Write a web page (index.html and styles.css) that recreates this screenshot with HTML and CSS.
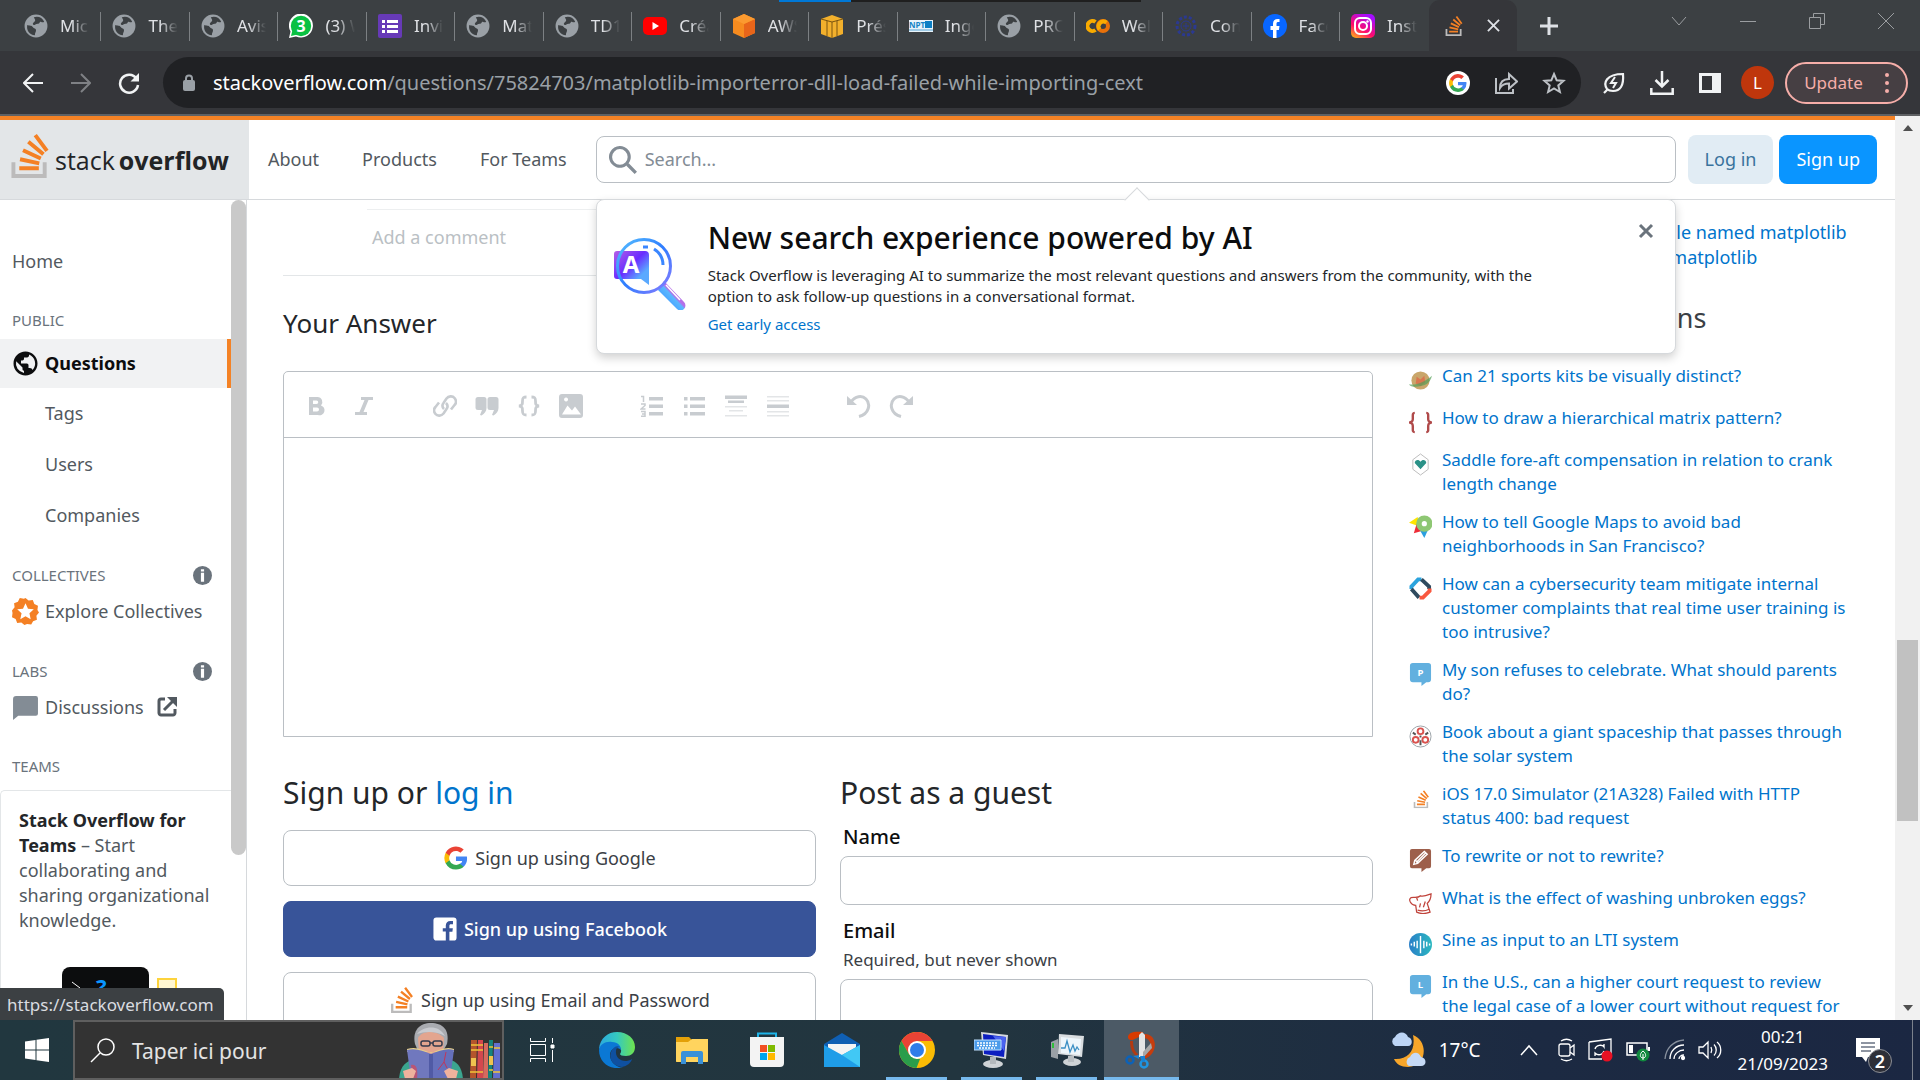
FILE: index.html
```html
<!DOCTYPE html>
<html lang="en">
<head>
<meta charset="utf-8">
<title>python - Matplotlib ImportError: DLL load failed while importing _cext - Stack Overflow</title>
<link rel="stylesheet" href="styles.css">
</head>
<body>
<svg class="sprite" aria-hidden="true">
  <symbol id="globe" viewBox="0 0 18 18"><path d="M9 1C4.64 1 1 4.64 1 9c0 4.36 3.64 8 8 8 4.36 0 8-3.64 8-8 0-4.36-3.64-8-8-8ZM8 15.32a6.46 6.46 0 0 1-4.3-2.74 6.46 6.46 0 0 1-.93-5.01L7 11.68v.8c0 .88.12 1.32 1 1.32v1.52Zm5.72-2c-.2-.66-1-1.32-1.72-1.32h-1v-2c0-.44-.56-1-1-1H6V7h1c.44 0 1-.56 1-1V5h2c.88 0 1.4-.72 1.4-1.6v-.33a6.45 6.45 0 0 1 3.83 4.51 6.45 6.45 0 0 1-1.51 5.74Z" fill="currentColor"/></symbol>
  <symbol id="webglobe" viewBox="0 0 22 22"><circle cx="11" cy="11" r="10.500" fill="#9aa0a6"/><path d="M3 10c2 1 4 0 5 2 1 1.500 3 1 3 3s-1 2-1 4.500C5 19 2 15 3 10ZM9 3c4-1.500 8 .5 9.500 4-1 1-2 .5-3 0-1.500 0-1 2-3 2s-2 1.500-3.500 1S8 8 9.500 7 10 5 9 3Z" fill="#3c4043"/></symbol>
  <symbol id="so" viewBox="0 0 24 24"><path d="M15.725 0l-1.720 1.277 6.390 8.588 1.716-1.277ZM11.785 3.418l-1.369 1.644 8.225 6.850 1.369-1.644ZM8.635 7.883l-.905 1.940 9.702 4.517.904-1.940ZM6.785 12.743l-.44 2.093 10.473 2.201.44-2.092ZM6.155 17.603v2.130h10.660v-2.130Z" fill="#f48024"/><path d="M1.890 15.470V24h19.190v-8.530h-2.133v6.397H4.021V15.470Z" fill="#bcbbbb"/></symbol>
  <symbol id="google" viewBox="0 0 18 18"><path d="M16.510 8H8.980v3h4.300c-.18 1-.74 1.480-1.600 2.040v2.010h2.600a7.800 7.800 0 0 0 2.380-5.880c0-.57-.05-.66-.15-1.180Z" fill="#4285F4"/><path d="M8.980 17c2.160 0 3.970-.72 5.300-1.940l-2.600-2a4.800 4.800 0 0 1-7.180-2.540H1.830v2.070A8 8 0 0 0 8.980 17Z" fill="#34A853"/><path d="M4.500 10.520a4.800 4.800 0 0 1 0-3.040V5.410H1.830a8 8 0 0 0 0 7.180l2.670-2.070Z" fill="#FBBC05"/><path d="M8.980 4.180c1.170 0 2.230.4 3.060 1.200l2.300-2.300A8 8 0 0 0 1.830 5.400L4.500 7.490a4.770 4.770 0 0 1 4.480-3.300Z" fill="#EA4335"/></symbol>
  <symbol id="info" viewBox="0 0 18 18"><circle cx="9" cy="9" r="9" fill="#6a737c"/><path d="M7.500 3h3v2.300h-3ZM7.500 6.500h3V15h-3Z" fill="#fff"/></symbol>
</svg>

<div class="desktop">
  <div class="browser">
    <div class="tabstrip">
      <div class="tabs">
        <div class="tab"><svg><use href="#webglobe"/></svg><span>Micro</span></div>
        <div class="tab"><svg><use href="#webglobe"/></svg><span>The M</span></div>
        <div class="tab"><svg><use href="#webglobe"/></svg><span>Avis d</span></div>
        <div class="tab"><svg viewBox="0 0 24 24"><path d="M0 24l1.500-6.500A12 12 0 1 1 7 22.500Z" fill="#fff"/><circle cx="12" cy="12" r="10.200" fill="#0ac143"/><path d="M2 22l1.500-6 5 4.500Z" fill="#0ac143"/><text x="12" y="18" text-anchor="middle" font-size="16" font-weight="700" fill="#fff">3</text></svg><span>(3) W</span></div>
        <div class="tab"><svg viewBox="0 0 24 24"><rect width="24" height="24" rx="2" fill="#673ab7"/><path d="M4 6h3v3H4Zm5 0h11v3H9ZM4 11h3v3H4Zm5 0h11v3H9ZM4 16h3v3H4Zm5 0h11v3H9Z" fill="#fff"/></svg><span>Invita</span></div>
        <div class="tab"><svg><use href="#webglobe"/></svg><span>Math</span></div>
        <div class="tab"><svg><use href="#webglobe"/></svg><span>TD1 -</span></div>
        <div class="tab"><svg viewBox="0 0 24 24"><rect y="3" width="24" height="18" rx="5" fill="#f00"/><path d="M9.500 8v8l6.500-4Z" fill="#fff"/></svg><span>Créat</span></div>
        <div class="tab"><svg viewBox="0 0 24 24"><path d="M12 0l11 5v14l-11 5L1 19V5Z" fill="#f68b1f"/><path d="M12 10l11-5v14l-11 5Z" fill="#e8651a"/><path d="M12 0l11 5-11 5L1 5Z" fill="#fb9a30"/></svg><span>AWS</span></div>
        <div class="tab"><svg viewBox="0 0 24 24"><path d="M1 5l11-4 11 4v15l-11 4L1 20Z" fill="#f2b02c"/><path d="M1 5l11 3 11-3M12 8v16M7 7v15M17 7v15" stroke="#7a5410" fill="none"/></svg><span>Prése</span></div>
        <div class="tab"><svg viewBox="0 0 24 24"><path d="M0 6h24v12H0Z" fill="#e8f3fa"/><path d="M16 7h7v7h-7Z" fill="#0c7fc4"/><path d="M0 15h24v2H0Z" fill="#9fcbe6"/><text x="0" y="14" font-size="8" font-weight="700" fill="#1583c6">NPT</text></svg><span>Ingén</span></div>
        <div class="tab"><svg><use href="#webglobe"/></svg><span>PROJ</span></div>
        <div class="tab"><svg viewBox="0 0 24 24" fill="none" stroke-width="4"><path d="M9.500 8a5 5 0 1 0 0 8" stroke="#f9ab00"/><circle cx="17" cy="12" r="5" stroke="#e8710a"/><path d="M13.500 15.500a5 5 0 0 1 7-7" stroke="#f9ab00"/></svg><span>Welc</span></div>
        <div class="tab"><svg viewBox="0 0 24 24" fill="none" stroke="#2b3990"><circle cx="12" cy="12" r="9" stroke-width="3" stroke-dasharray="3 2"/><circle cx="12" cy="12" r="5"/><path d="M9 12h6M12 9v6"/></svg><span>Conn</span></div>
        <div class="tab"><svg viewBox="0 0 24 24"><circle cx="12" cy="12" r="12" fill="#0866ff"/><path d="M10 24v-8H7.500v-4H10v-2c0-4 2-5.500 6.500-5V8c-2.500-.2-3 .3-3 2v2h3l-.6 4h-2.400v8Z" fill="#fff"/></svg><span>Faceb</span></div>
        <div class="tab tab-last"><svg viewBox="0 0 24 24"><defs><linearGradient id="ig" x1="0" y1="1" x2=".6" y2="0"><stop offset="0" stop-color="#fec40c"/><stop offset=".45" stop-color="#ff0b6b"/><stop offset="1" stop-color="#a50cff"/></linearGradient></defs><rect width="24" height="24" rx="5" fill="url(#ig)"/><g fill="none" stroke="#fff" stroke-width="2"><rect x="4" y="4" width="16" height="16" rx="5"/><circle cx="12" cy="12" r="4"/></g><circle cx="16.500" cy="7.500" r="1.200" fill="#fff"/></svg><span>Insta</span></div>
        <div class="tab tab-active"><svg><use href="#so"/></svg><svg class="tab-x" viewBox="0 0 14 14"><path d="M1 1l12 12M13 1L1 13" stroke="#dee1e6" stroke-width="2"/></svg></div>
      </div>
      <div class="winbar">
        <button aria-label="New tab"><svg width="18" height="18"><path d="M9 0v18M0 9h18" stroke="#dee1e6" stroke-width="3"/></svg></button>
        <div class="wincontrols">
          <button aria-label="Search tabs"><svg width="16" height="12"><path d="M1 2l7 8 7-8" fill="none" stroke="#9b9ea1"/></svg></button>
          <button aria-label="Minimize"><svg width="16" height="16"><path d="M0 8.500h16" stroke="#9b9ea1"/></svg></button>
          <button aria-label="Restore"><svg width="16" height="16" fill="none" stroke="#9b9ea1"><path d="M.5 4.500h11v11H.5ZM4.500 4V.5h11v11H12"/></svg></button>
          <button aria-label="Close window"><svg width="16" height="16"><path d="M0 0l16 16M16 0L0 16" stroke="#9b9ea1"/></svg></button>
        </div>
      </div>
      <div class="edge-strip"></div>
    </div>

    <div class="toolbar">
      <div class="navbtns">
        <button aria-label="Back"><svg width="20" height="20" viewBox="0 0 20 20" fill="none" stroke="#f1f3f4" stroke-width="2"><path d="M20 10H2M10 1l-9 9 9 9"/></svg></button>
        <button aria-label="Forward"><svg width="20" height="20" viewBox="0 0 20 20" fill="none" stroke="#7f8185" stroke-width="2"><path d="M0 10h18M10 1l9 9-9 9"/></svg></button>
        <button aria-label="Reload"><svg width="22" height="22" viewBox="0 0 22 22"><path d="M18.500 6.500A9 9 0 1 0 20 13" fill="none" stroke="#f1f3f4" stroke-width="2.500"/><path d="M21 1v8.500h-8.500Z" fill="#f1f3f4"/></svg></button>
      </div>
      <div class="omnibox">
        <svg width="12" height="18" viewBox="0 0 12 18"><path d="M3 8V4.500a3 3 0 0 1 6 0V8" fill="none" stroke="#9aa0a6" stroke-width="2"/><rect y="6" width="12" height="11" rx="2" fill="#9aa0a6"/></svg>
        <span class="url"><b>stackoverflow.com</b>/questions/75824703/matplotlib-importerror-dll-load-failed-while-importing-cext</span>
        <div class="omni-actions">
          <svg width="24" height="24" viewBox="0 0 24 24"><circle cx="12" cy="12" r="12" fill="#fff"/><use href="#google" x="2" y="2" width="20" height="20"/></svg>
          <svg width="24" height="24" viewBox="0 0 24 24" fill="none" stroke="#bdc1c6" stroke-width="2"><path d="M2 7v15h17v-4"/><path d="M6 17c0-6 3-9 9-9V3l8 7.500-8 7v-5c-4 0-7 1-9 4.500Z"/></svg>
          <svg width="24" height="24" viewBox="0 0 24 24" fill="none" stroke="#bdc1c6" stroke-width="2"><path d="M12 3l2.700 6.300 6.800.6-5.200 4.500 1.600 6.600L12 17.500 6.100 21l1.600-6.600L2.500 9.900l6.800-.6Z"/></svg>
        </div>
      </div>
      <div class="extras">
        <button aria-label="Energy saver"><svg width="24" height="24" viewBox="0 0 24 24" fill="none" stroke="#f1f3f4" stroke-width="2.200"><path d="M2 22l4-4M5 18C1 12 4 3 21 3c1 12-3 17-10 17-3 0-5-1-6-2Z"/><path d="M13 6l-4 6h5l-3 5" stroke-width="2"/></svg></button>
        <button aria-label="Downloads"><svg width="24" height="24" viewBox="0 0 24 24" fill="none" stroke="#f1f3f4" stroke-width="2.500"><path d="M12 0v15M5.500 9l6.500 6.500L18.500 9M1.300 17v5.700h21.400V17"/></svg></button>
        <button aria-label="Side panel"><svg width="22" height="22" viewBox="0 0 22 22"><path d="M0 1h22v20H0ZM3 4v14h10V4Z" fill="#f1f3f4" fill-rule="evenodd"/></svg></button>
        <button class="avatar" aria-label="Profile">L</button>
        <button class="update">Update<svg width="4" height="20" viewBox="0 0 4 20" fill="#f6aea9"><circle cx="2" cy="2" r="2"/><circle cx="2" cy="10" r="2"/><circle cx="2" cy="18" r="2"/></svg></button>
      </div>
    </div>

    <div class="viewport">
      <div class="page">
        <header class="topbar">
          <a class="logo" href="#"><svg><use href="#so"/></svg><span>stack<b>overflow</b></span></a>
          <nav class="topnav"><a href="#">About</a><a href="#">Products</a><a href="#">For Teams</a></nav>
          <div class="search">
            <svg width="28" height="28" viewBox="0 0 18 18"><path d="m18 16.500-5.140-5.180h-.35a7 7 0 1 0-1.190 1.190v.35L16.500 18l1.500-1.500ZM12 7A5 5 0 1 1 2 7a5 5 0 0 1 10 0Z" fill="#838c95"/></svg>
            <input type="text" placeholder="Search..." aria-label="Search">
            <div class="popover">
              <svg class="ai" viewBox="0 0 72 72"><defs><linearGradient id="a1" x1="0" y1="0" x2="1" y2="1"><stop offset="0" stop-color="#b55fe6"/><stop offset=".45" stop-color="#6a2cff"/><stop offset=".75" stop-color="#5aa9ff"/></linearGradient><linearGradient id="a2" x1="0" y1="0" x2="1" y2="1"><stop offset="0" stop-color="#57c0ff"/><stop offset=".5" stop-color="#2f7dff"/><stop offset="1" stop-color="#8a7bff"/></linearGradient><linearGradient id="a3" x1="0" y1="1" x2="1" y2="0"><stop offset="0" stop-color="#2f7dff"/><stop offset=".5" stop-color="#5ab8ff"/><stop offset=".55" stop-color="#b46fe8"/></linearGradient></defs><path d="M50 43l20 21a4 4 0 0 1-7 7L44 52Z" fill="url(#a3)"/><path d="M52 47l14 15" stroke="#fff" stroke-width="1.500"/><path d="M3 13h28a4 4 0 0 1 4 4v30l-8-6H3a3 3 0 0 1-3-3V16a3 3 0 0 1 3-3Z" fill="url(#a1)"/><circle cx="30" cy="28" r="26.500" fill="none" stroke="url(#a2)" stroke-width="3"/><path d="M29 9h5M40 11a19 19 0 0 1 9 16" fill="none" stroke="#3a86ff" stroke-width="3"/><text x="17" y="35" text-anchor="middle" font-size="24" font-weight="700" fill="#fff">A</text></svg>
              <div class="pop-text">
                <h2>New search experience powered by AI</h2>
                <p>Stack Overflow is leveraging AI to summarize the most relevant questions and answers from the community, with the<br>option to ask follow-up questions in a conversational format.</p>
                <a href="#">Get early access</a>
              </div>
              <button class="pop-close" aria-label="Dismiss"><svg width="16" height="16"><path d="M2 2l12 12M14 2L2 14" stroke="#6a737c" stroke-width="3"/></svg></button>
            </div>
          </div>
          <a class="btn-login" href="#">Log in</a>
          <a class="btn-signup" href="#">Sign up</a>
        </header>

        <div class="layout">
          <aside class="leftnav">
            <nav>
              <a class="item home" href="#">Home</a>
              <h3 class="public">Public</h3>
              <a class="item active" href="#"><svg><use href="#globe"/></svg>Questions</a>
              <a class="item sub" href="#">Tags</a>
              <a class="item sub" href="#">Users</a>
              <a class="item sub" href="#">Companies</a>
              <h3 class="collectives">Collectives<svg><use href="#info"/></svg></h3>
              <a class="item short" href="#"><svg viewBox="0 0 26 26"><path d="M13 0l3 2.500 4-.5 1.500 3.700 3.500 1.800-.5 4L26 14l-2.500 3 .5 4-3.700 1.500L18.500 25.500l-4-.5L12 26l-3-2.500-4 .5-1.500-3.700L0 18.500l.5-4L0 12l2.500-3L2 5l3.700-1.500L7.500 0l4 .8Z" fill="#f48024"/><path d="M13 5l2.400 5.300 5.600.6-4.200 3.800L18 20.500 13 17.500l-5 3 1.200-5.800L5 10.900l5.600-.6Z" fill="#fff"/></svg>Explore Collectives</a>
              <h3 class="labs">Labs<svg><use href="#info"/></svg></h3>
              <a class="item short" href="#"><svg viewBox="0 0 26 26"><path d="M4 2h19a2 2 0 0 1 2 2v15a2 2 0 0 1-2 2H6l-5 4V5a3 3 0 0 1 3-3Z" fill="#838c95"/></svg>Discussions<svg class="ext" viewBox="0 0 20 20" fill="none" stroke="#525960" stroke-width="3"><path d="M8 2H4a2 2 0 0 0-2 2v12c0 1 1 2 2 2h12c1 0 2-1 2-2v-4M7 13L17 3"/><path d="M10 0h10v10Z" fill="#525960" stroke="none"/></svg></a>
              <h3 class="teams">Teams</h3>
              <div class="teamcard">
                <p><b>Stack Overflow for Teams</b> – Start collaborating and sharing organizational knowledge.</p>
                <svg viewBox="0 0 115 60"><rect width="87" height="60" rx="8" fill="#0c0d0e"/><path d="M10 15l8 6-8 5M20 27h12" stroke="#fff" fill="none"/><text x="34" y="28" font-size="22" font-weight="700" fill="#0a95ff">?</text><rect x="96" y="12" width="18" height="18" fill="#fff6d1" stroke="#fdd33c" stroke-width="2"/></svg>
              </div>
            </nav>
            <div class="thumb"></div>
          </aside>

          <main class="main">
            <div class="comment"><a href="#">Add a comment</a></div>
            <h2 class="answer-title"><label for="answer">Your Answer</label></h2>
            <div class="editor">
              <div class="tools">
                <div class="group wide">
                  <button aria-label="Bold"><svg viewBox="0 0 24 24"><path d="M5 3h8.500a5 5 0 0 1 3.500 8.400A5 5 0 0 1 14 21H5ZM9 6.500v3.500h3.500a1.700 1.700 0 0 0 0-3.500ZM9 13.500v4h4a2 2 0 0 0 0-4Z" fill="#c8ccd0" fill-rule="evenodd"/></svg></button>
                  <button aria-label="Italic"><svg viewBox="0 0 24 24"><path d="M9 3h12v3h-4.500L11.500 18H15v3H3v-3h4.500l5-12H9Z" fill="#c8ccd0"/></svg></button>
                </div>
                <div class="group">
                  <button aria-label="Link"><svg viewBox="0 0 24 24" fill="none" stroke="#c8ccd0" stroke-width="2.600"><path d="M11 15c-2-2-2-4-.5-6l3-4.500c2-2.500 6-3 8-.5s2 5 0 7L18 15.500"/><path d="M13 9c2 2 2 4 .5 6l-3 4.500c-2 2.500-6 3-8 .5s-2-5 0-7L6 8.500"/></svg></button>
                  <button aria-label="Quote"><svg viewBox="0 0 24 24"><path d="M3 3h6a2.500 2.500 0 0 1 2.500 2.500V14c0 3-2 6-5 7.500L5 21l2-5H3a2.500 2.500 0 0 1-2.500-2.500v-8A2.500 2.500 0 0 1 3 3ZM15 3h6a2.500 2.500 0 0 1 2.500 2.500V14c0 3-2 6-5 7.500L17 21l2-5h-4a2.500 2.500 0 0 1-2.500-2.500v-8A2.500 2.500 0 0 1 15 3Z" fill="#c8ccd0"/></svg></button>
                  <button aria-label="Code"><svg viewBox="0 0 24 24" fill="none" stroke="#c8ccd0" stroke-width="2.800"><path d="M9.500 3C6 3 5.500 4 5.500 7s0 4.500-3.500 5c3.500.5 3.500 2 3.500 5s.5 4 4 4M14.500 3c3.500 0 4 1 4 4s0 4.500 3.500 5c-3.500.5-3.500 2-3.500 5s-.5 4-4 4"/></svg></button>
                  <button aria-label="Image"><svg viewBox="0 0 24 24"><path d="M3 0h18a3 3 0 0 1 3 3v18a3 3 0 0 1-3 3H3a3 3 0 0 1-3-3V3a3 3 0 0 1 3-3ZM3 20.500h19l-6-8-3 4-4.500-5ZM7 3.500a2 2 0 1 0 .1 0Z" fill="#c8ccd0" fill-rule="evenodd"/></svg></button>
                </div>
                <div class="group">
                  <button aria-label="Numbered list"><svg viewBox="0 0 24 24"><path d="M9 3h14v3.500H9Zm0 7.500h14V14H9ZM9 18h14v3.500H9Z" fill="#c8ccd0"/><path d="M1 2.500h2.500V8M1 10h4v1.500L1 15h4.500M1 17.500h4v4.800H1M2 20h3" fill="none" stroke="#c8ccd0" stroke-width="1.500"/></svg></button>
                  <button aria-label="Bulleted list"><svg viewBox="0 0 24 24"><path d="M8 3h15v3.500H8Zm0 7.500h15V14H8ZM8 18h15v3.500H8ZM2 3h3.500v3.500H2Zm0 7.500h3.500V14H2ZM2 18h3.500v3.500H2Z" fill="#c8ccd0"/></svg></button>
                  <button aria-label="Heading"><svg viewBox="0 0 24 24"><path d="M1 1.500h22V5H1Zm3 5h16V9H4Z" fill="#c8ccd0"/><path d="M1 12h22v1.500H1Zm4 4h14v1.500H5Zm-4 5h22v1.500H1Z" fill="#e3e5e7"/></svg></button>
                  <button aria-label="Horizontal rule"><svg viewBox="0 0 24 24"><path d="M1 10.500h22V14H1Z" fill="#c8ccd0"/><path d="M1 2h22v1.500H1Zm0 4h22v1.500H1Zm0 11h22v1.500H1Zm0 4h22v1.500H1Z" fill="#e3e5e7"/></svg></button>
                </div>
                <div class="group">
                  <button aria-label="Undo"><svg viewBox="0 0 24 24"><path d="M0 2v9h10Z" fill="#c8ccd0"/><path d="M4 8c4-6 11-7 15-3 5 5 3 15-7 17.500" fill="none" stroke="#c8ccd0" stroke-width="3"/></svg></button>
                  <button aria-label="Redo"><svg viewBox="0 0 24 24"><path d="M24 2v9H14Z" fill="#c8ccd0"/><path d="M20 8c-4-6-11-7-15-3-5 5-3 15 7 17.500" fill="none" stroke="#c8ccd0" stroke-width="3"/></svg></button>
                </div>
              </div>
              <textarea id="answer"></textarea>
            </div>
            <div class="columns">
              <section class="signup">
                <h2>Sign up or <a href="#">log in</a></h2>
                <button class="provider"><svg viewBox="0 0 18 18"><use href="#google"/></svg>Sign up using Google</button>
                <button class="provider fb"><svg viewBox="0 0 18 18"><path d="M3 1a2 2 0 0 0-2 2v12c0 1.100.9 2 2 2h12a2 2 0 0 0 2-2V3a2 2 0 0 0-2-2H3Zm6.550 16v-6.200H7.460V8.400h2.090V6.610c0-2.070 1.260-3.200 3.100-3.200.88 0 1.640.07 1.870.1v2.160h-1.290c-1 0-1.190.48-1.190 1.180V8.400h2.390l-.31 2.420h-2.080V17h-2.500Z" fill="#fff"/></svg>Sign up using Facebook</button>
                <button class="provider"><svg viewBox="0 0 24 24"><use href="#so"/></svg>Sign up using Email and Password</button>
              </section>
              <section class="guest">
                <h2>Post as a guest</h2>
                <label for="name">Name</label>
                <input id="name" type="text">
                <label class="second" for="email">Email</label>
                <p>Required, but never shown</p>
                <input id="email" type="email">
              </section>
            </div>
          </main>

          <aside class="right">
            <p class="related"><a href="#">ImportError: No module named matplotlib</a><a href="#">Conda cannot import matplotlib</a></p>
            <h2>Hot Network Questions</h2>
            <ul>
              <li><svg viewBox="0 0 24 24"><circle cx="12" cy="12" r="9.500" fill="#c9a66b"/><path d="M8 8l4 3 4-4 1 7-5 4-5-3Z" fill="#d9774f"/><path d="M0 16c8 1 16-2 24-9-1 4-3 7-6 9-6 3-16 4-18 0Z" fill="#56a05a" opacity=".7"/></svg><a href="#">Can 21 sports kits be visually distinct?</a></li>
              <li><svg viewBox="0 0 24 24" fill="none" stroke="#b04a4a" stroke-width="2.500"><path d="M6 2C3.500 2 4 4 4 7s0 4-3 5c3 1 3 2 3 5s-.5 5 2 5M18 2c2.500 0 2 2 2 5s0 4 3 5c-3 1-3 2-3 5s.5 5-2 5"/></svg><a href="#">How to draw a hierarchical matrix pattern?</a></li>
              <li><svg viewBox="0 0 24 24"><path d="M12 1l8 6v10l-8 6-8-6V7Z" fill="#fff" stroke="#bbb"/><path d="M12 17L6 10.500C6 7 10 6 12 9c2-3 6-2 6 1.500Z" fill="#2a9187"/></svg><a href="#">Saddle fore-aft compensation in relation to crank length change</a></li>
              <li><svg viewBox="0 0 24 24"><path d="M0 8l9-6 2 10Z" fill="#ffe500"/><path d="M5 19l3-10 8 7Z" fill="#ee2c37"/><path d="M16 24l-5-9h9Z" fill="#2b9fdf"/><circle cx="16" cy="9" r="8.500" fill="#8ec773"/><circle cx="16" cy="9" r="2.700" fill="#fff"/></svg><a href="#">How to tell Google Maps to avoid bad neighborhoods in San Francisco?</a></li>
              <li><svg viewBox="0 0 24 24" fill="none" stroke-width="4"><path d="M2.500 12.500V10l7-7.500H13" stroke="#2ba3dd"/><path d="M13 2.500l8 7.500v2.500M2.500 12.500l8 9" stroke="#2f4a5e"/><path d="M21.500 12v2.500l-7 7H11" stroke="#f9583f"/></svg><a href="#">How can a cybersecurity team mitigate internal customer complaints that real time user training is too intrusive?</a></li>
              <li><svg viewBox="0 0 24 24"><path d="M4 0h16a3 3 0 0 1 3 3v14a3 3 0 0 1-3 3h-2l-5 4v-4H4a3 3 0 0 1-3-3V3a3 3 0 0 1 3-3Z" fill="#62b0df"/><text x="12" y="14" text-anchor="middle" font-size="10" font-weight="700" fill="#fff">P</text></svg><a href="#">My son refuses to celebrate. What should parents do?</a></li>
              <li><svg viewBox="0 0 24 24" fill="none"><circle cx="12" cy="12" r="11" stroke="#9aa1a6"/><g stroke="#d9534f" stroke-width="2"><circle cx="12" cy="6.500" r="3"/><circle cx="7" cy="15.500" r="3"/><circle cx="17" cy="15.500" r="3"/></g><path d="M4 8l3 2M20 8l-3 2M12 16v5M12 11v2" stroke="#555" stroke-width="2"/></svg><a href="#">Book about a giant spaceship that passes through the solar system</a></li>
              <li><svg viewBox="-2 -3 28 28"><use href="#so" width="22" height="22" x="2" y="1"/></svg><a href="#">iOS 17.0 Simulator (21A328) Failed with HTTP status 400: bad request</a></li>
              <li><svg viewBox="0 0 24 24"><path d="M3 0h18a2 2 0 0 1 2 2v16a2 2 0 0 1-2 2h-3l-5 4v-4H3a2 2 0 0 1-2-2V2a2 2 0 0 1 2-2Z" fill="#9d5f4b"/><path d="M5 16l1-4L16 2.500l3 3L9 15ZM7 12l3 3M7.500 14L17 4.500" fill="none" stroke="#fff" stroke-width="1.500"/></svg><a href="#">To rewrite or not to rewrite?</a></li>
              <li><svg viewBox="0 0 24 24" fill="none" stroke="#c0433b" stroke-width="1.300"><path d="M7 15C2 15-1 9 2 7c3-1 7 1 10-2 4 1 8-1 11-2 0 5-2 8-4 10l3 9c-5 2-10 2-14 0Z"/><path d="M8 7l1 3M12 13l-1 4M17 11l-2 6M9 20c4 1 8 1 12-1"/></svg><a href="#">What is the effect of washing unbroken eggs?</a></li>
              <li><svg viewBox="0 0 24 24"><defs><linearGradient id="dsp"><stop offset="0" stop-color="#2a7fc8"/><stop offset="1" stop-color="#2bb8c0"/></linearGradient></defs><circle cx="12" cy="12" r="12" fill="url(#dsp)"/><path d="M12 3v18M8.500 8v8M15.500 8v8M5.500 9v5M18.500 9v5M2.500 11v2M21.500 11v2" stroke="#fff" stroke-width="1.500"/></svg><a href="#">Sine as input to an LTI system</a></li>
              <li><svg viewBox="0 0 24 24"><path d="M4 0h16a3 3 0 0 1 3 3v14a3 3 0 0 1-3 3h-2l-5 4v-4H4a3 3 0 0 1-3-3V3a3 3 0 0 1 3-3Z" fill="#62b0df"/><text x="12" y="14" text-anchor="middle" font-size="10" font-weight="700" fill="#fff">L</text></svg><a href="#">In the U.S., can a higher court request to review the legal case of a lower court without request for</a></li>
            </ul>
          </aside>
        </div>
        <div class="statusbubble">https://stackoverflow.com</div>
      </div>
      <div class="scrollbar"><i class="up"></i><span></span><i class="down"></i></div>
    </div>
  </div>

  <footer class="taskbar">
    <button class="start" aria-label="Start"><svg width="24" height="24" viewBox="0 0 24 24" fill="#fff"><path d="M0 3.500l10.500-1.500v9.500H0ZM11.500 1.800L24 0v11.500H11.500ZM0 12.500h10.500V22L0 20.500ZM11.500 12.500H24V24l-12.500-1.800Z"/></svg></button>
    <div class="tasksearch">
      <svg width="25" height="25" viewBox="0 0 25 25" fill="none" stroke="#fff" stroke-width="1.500"><circle cx="16" cy="9" r="8"/><path d="M10 15L1 24"/></svg>
      <span>Taper ici pour</span>
      <svg class="reader" viewBox="0 0 104 57"><path d="M1 57c1-14 8-18 14-19h37c6 1 12 6 13 19Z" fill="#3ba58f"/><path d="M17 22C14 8 22 1 33 1s19 6 16 21l-4 7H20Z" fill="#a9abb0"/><path d="M20 16c4-8 19-8 26 0l-1 15c-4 6-20 6-24 0Z" fill="#e3a58f"/><path d="M19 12c6-8 22-10 28 2-8-5-20-5-28-2Z" fill="#c9cbd0"/><g fill="none" stroke="#333a4c" stroke-width="1.500"><rect x="23" y="19" width="9" height="5" rx="2"/><rect x="35" y="19" width="9" height="5" rx="2"/><path d="M32 21h3"/></g><path d="M9 27c9-3 16 1 24 4 8-3 15-7 23-4v3H9Z" fill="#e6cf8b"/><path d="M9 28c9-2 16 1 24 4v25H13Z" fill="#7078be"/><path d="M56 28c-8-2-15 1-23 4v25h19Z" fill="#6570bb"/><path d="M31 32h4v25h-4Z" fill="#505aa5"/><path d="M13 43c6-2 7 6 6 14h-4Z" fill="#b85575"/><path d="M48 30l-2 10-6 8M46 40l3 6" stroke="#c1365a" fill="none"/><path d="M5 49l9-3 4 3-3 8H7ZM60 49l-9-3-5 3 4 8h8Z" fill="#efb29d"/><path d="M73 18h6l-1 39h-6Z" fill="#b5552c"/><path d="M80 18h5v39h-6Z" fill="#d2474e"/><path d="M86 21h4v36h-5Z" fill="#d66a5e"/><path d="M91 18h4l-1 39h-4Z" fill="#16847d"/><path d="M96 21h6v36h-7Z" fill="#636fd0"/><path d="M73 23h12M73 28h12M72 50h13M91 25h4M91 48h4M96 26h6M95 50h7" stroke="#f0c53a" stroke-width="1.500"/><path d="M73 36h5v8h-5ZM91 34h4v9h-4Z" fill="#efc34f"/></svg>
    </div>
    <div class="apps">
      <button class="taskview" aria-label="Task view"><svg width="26" height="26" viewBox="0 0 26 26" fill="none" stroke="#fff"><path d="M1.500 1v3.500h15V1M1.500 7.500h15v11h-15ZM1.500 25v-3.500h15V25M23.500 1v5M23.500 13v12"/><path d="M22 8h3v3h-3Z" fill="#fff"/></svg></button>
      <button aria-label="Edge"><svg width="36" height="36" viewBox="0 0 36 36"><defs><linearGradient id="e1"><stop offset="0" stop-color="#2aa8e0"/><stop offset=".5" stop-color="#35c9c0"/><stop offset="1" stop-color="#6fe34d"/></linearGradient></defs><path d="M0 17C1 6 9 0 18 0c11 0 18 7 18 15 0 6-4 9-9 9-4 0-6-1-6-2 2-2 2-8-5-9-8-1-13 1-16 4Z" fill="url(#e1)"/><path d="M0 18c1-6 7-9 13-8 6 0 9 4 9 8-3-4-11-2-11 5s6 12 13 13C10 38 0 30 0 18Z" fill="#0b78d4"/><path d="M13 18c-4 6-1 16 10 17 5-1 9-4 10-8-8 5-17 0-16-8 0-3 2-4 4-4-3-2-6 0-8 3Z" fill="#0f50a0"/></svg></button>
      <button aria-label="File Explorer"><svg width="32" height="28" viewBox="0 0 32 28"><path d="M0 1h13l3 3h16v21a1 1 0 0 1-1 1H1a1 1 0 0 1-1-1Z" fill="#e3a008"/><path d="M0 6h12l4-3h16v22a1 1 0 0 1-1 1H1a1 1 0 0 1-1-1Z" fill="#ffd45e"/><path d="M5 28V17a2 2 0 0 1 2-2h18a2 2 0 0 1 2 2v11h-5v-7H10v7Z" fill="#3a91d8"/></svg></button>
      <button aria-label="Store"><svg width="36" height="36" viewBox="0 0 36 36"><path d="M9 6V1.500h18V6" fill="none" stroke="#1fb4e8" stroke-width="2"/><path d="M1 5h34v26a4 4 0 0 1-4 4H5a4 4 0 0 1-4-4Z" fill="#f3f3f3"/><path d="M11 13h7v7h-7Z" fill="#f25022"/><path d="M19 13h7v7h-7Z" fill="#7fba00"/><path d="M11 21h7v7h-7Z" fill="#00a4ef"/><path d="M19 21h7v7h-7Z" fill="#ffb900"/></svg></button>
      <button aria-label="Mail"><svg width="36" height="34" viewBox="0 0 36 34"><path d="M0 11L18 0l18 11v3H0Z" fill="#0f5fb3"/><path d="M4 11h28v8l-14 6L4 19Z" fill="#f4f4f4"/><path d="M0 12l18 10 18-10v22H0Z" fill="#1f9de8"/><path d="M36 12L18 22l18 12Z" fill="#41c8f5"/></svg></button>
      <button class="open" aria-label="Chrome"><svg width="36" height="36" viewBox="0 0 36 36"><circle cx="18" cy="18" r="18" fill="#fbbc04"/><path d="M2.400 9A18 18 0 0 1 33.600 9H18L10.200 22.500Z" fill="#ea4335"/><path d="M2.400 9L10.200 22.500 18 27l3 0L17.500 36A18 18 0 0 1 2.400 9Z" fill="#2a9d4b"/><circle cx="18" cy="18" r="9" fill="#fff"/><circle cx="18" cy="18" r="7" fill="#2f7de9"/></svg></button>
      <button class="open" aria-label="On-screen keyboard"><svg width="36" height="36" viewBox="0 0 36 36"><path d="M7 0l27 3-2 24L9 23Z" fill="#d5d9de"/><path d="M9 2l23 3-2 20-20-3Z" fill="#0c1ec0"/><path d="M19 4l13 1-2 14Z" fill="#4a63f0"/><ellipse cx="19" cy="32" rx="10" ry="4" fill="#cfd3d6"/><path d="M16 25h6v7h-6Z" fill="#b4b9bd"/><path d="M0 8h27v10H0Z" fill="#4b9bea" stroke="#bfe0ff"/><path d="M3 11h21M3 13.500h21M5 16h16" stroke="#fff" stroke-width="1.500" stroke-dasharray="2 1"/></svg></button>
      <button class="open" aria-label="Resource monitor"><svg width="34" height="32" viewBox="0 0 34 32"><path d="M1 8l7-3v20l-7-2Z" fill="#9aa1a6"/><path d="M2 9h2v5H2Z" fill="#2fbf3a"/><path d="M9 0l25 2-2 21L8 20Z" fill="#d9dde0"/><path d="M11 3l20 2-1 16-19-2Z" fill="#eef6fb"/><path d="M11 14h4l2-7 3 11 3-7 2 6 2-4 2 3" fill="none" stroke="#3b8fc4" stroke-width="1.300"/><ellipse cx="22" cy="28" rx="9" ry="4" fill="#cfd3d6"/><path d="M18 22h6v6h-6Z" fill="#b9bec2"/></svg></button>
      <button class="open current" aria-label="Snipping tool"><svg width="34" height="38" viewBox="0 0 34 38"><path d="M19 3C33 2 34 24 19 28l-1-4C28 22 28 6 18 7Z" fill="#c63d0e"/><path d="M5 10c0 7 2 12 7 16l1-3C9 20 8 15 8 10Z" fill="#b23a12"/><path d="M3 6C3 1 10 0 18 1l1 5C12 5 9 10 6 9 4 9 3 8 3 6Z" fill="#d83b01"/><path d="M14 26V4l3-3 3 3v22Z" fill="#e4e4e4"/><path d="M18 21l8-9 1 5-9 10Z" fill="#a8a8a8"/><circle cx="19" cy="33" r="3.500" fill="none" stroke="#1f95e0" stroke-width="2.500"/><circle cx="5" cy="29" r="3.500" fill="none" stroke="#0c62b8" stroke-width="2.500"/><path d="M15 25h5v6h-3ZM8 25l6-1v4Z" fill="#1583d8"/></svg></button>
    </div>
    <div class="tray">
      <div class="weather"><svg width="37" height="36" viewBox="0 0 37 36"><path d="M23 3c16 6 14 32-5 32-7 0-12-3-14-8 14 1 22-8 19-24Z" fill="#f7a62a"/><path d="M5 14a5 5 0 0 1 0-9C8-1 16-1 18 5c5 1 5 9 0 9Z" fill="#bcd4f5"/><path d="M19 34a5 5 0 0 1 1-9c3-6 9-5 11 0 6 1 6 9 0 9Z" fill="#c6daf6"/></svg>17°C</div>
      <svg class="more" width="18" height="12" viewBox="0 0 18 12" fill="none" stroke="#fff" stroke-width="1.500"><path d="M1 11l8-9 8 9"/></svg>
      <svg width="18" height="24" viewBox="0 0 18 24" fill="none" stroke="#fff" stroke-width="1.300"><rect x="1" y="6" width="11" height="12" rx="2"/><path d="M12 10l4-3v10l-4-3M3 3c4-2.500 7-2.500 11 0M3 21c4 2.500 7 2.500 11 0"/></svg>
      <svg width="26" height="24" viewBox="0 0 26 24" fill="none" stroke="#fff" stroke-width="1.300"><path d="M1 4l22-3v15M1 4v17h13M7 11c1-4 7-5 9-2v-3M16 13c-1 4-6 5-9 2v3"/><circle cx="19" cy="18" r="5.500" fill="#e81123" stroke="none"/></svg>
      <svg width="26" height="24" viewBox="0 0 26 24" fill="none"><rect x="1" y="5" width="20" height="12" stroke="#fff" stroke-width="1.500"/><path d="M3 7h4v8H3ZM22 9h2v4h-2Z" fill="#fff"/><circle cx="17" cy="17" r="6.500" fill="#10893e"/><path d="M17 13c4 3 3 7 0 7s-4-4 0-7ZM17 16v6" stroke="#fff"/></svg>
      <svg width="22" height="22" viewBox="0 0 22 22" fill="none" stroke="#fff" stroke-width="1.300"><path d="M1 20C2 9 9 2 20 1" stroke="#87909d"/><path d="M6 20C6 12 12 6 20 6M10 20c0-5 5-9 10-9M15 20c0-2 2-4 5-4"/><circle cx="19" cy="19" r="1.500" fill="#fff"/></svg>
      <svg width="24" height="22" viewBox="0 0 24 22" fill="none" stroke="#fff" stroke-width="1.300"><path d="M1 8h4l5-5v16l-5-5H1ZM13 8c1 2 1 4 0 6M16 5.500c3 3 3 8 0 11M19 3c5 4 5 12 0 16"/></svg>
      <div class="clock"><span>00:21</span><span>21/09/2023</span></div>
      <div class="notif"><svg width="36" height="37" viewBox="0 0 36 37"><path d="M0 1h24v19H12l-2 5-4-5H0Z" fill="#fff"/><path d="M5 6h14M5 10h14M5 14h10" stroke="#1c2a44"/><circle cx="24" cy="24" r="11.500" fill="#2d2f38" stroke="#8c8f97"/><text x="24" y="31" text-anchor="middle" font-size="18" font-weight="600" fill="#fff">2</text></svg></div>
    </div>
  </footer>
</div>
</body>
</html>
```
FILE: styles.css
```css
* { box-sizing: border-box; }
html, body { height: 100%; }
body {
  margin: 0;
  overflow: hidden;
  font-family: "Noto Sans", "Open Sans", sans-serif;
  font-size: 18px;
  line-height: 25px;
  color: #232629;
}
h2, h3, p, ul { margin: 0; padding: 0; font-weight: 400; }
ul { list-style: none; }
a { color: #0074cc; text-decoration: none; }
button, input, textarea { font: inherit; color: inherit; margin: 0; }
button { border: 0; background: none; padding: 0; display: flex; align-items: center; justify-content: center; }
svg { flex: none; }
.sprite { position: absolute; width: 0; height: 0; }

.desktop { height: 100vh; display: flex; flex-direction: column; }
.browser { flex: 1; min-height: 0; display: flex; flex-direction: column; }

/* Tab strip */
.tabstrip { position: relative; height: 51px; display: flex; background: #3c4043; padding-left: 13px; }
.edge-strip { position: absolute; top: 0; left: 779px; width: 362px; height: 2px; background: linear-gradient(90deg, #0078d7 72px, #1f1f1f 72px); }
.tabs { flex: 1; display: grid; grid-template-columns: repeat(17, 1fr); }
.tab { position: relative; display: flex; align-items: center; gap: 12px; padding: 0 12px 0 11px; min-width: 0; }
.tab::after { content: ""; position: absolute; right: 0; top: 12px; width: 1px; height: 29px; background: #7c8083; }
.tab svg { width: 24px; height: 24px; }
.tab span { flex: 1; overflow: hidden; white-space: nowrap; font-size: 17px; color: #dfe1e5; mask-image: linear-gradient(90deg, #000 40%, transparent 100%); }
.tab-last::after, .tab-active::after { display: none; }
.tab-active { background: #35363a; border-radius: 11px 11px 0 0; padding: 0 17px 0 15px; justify-content: space-between; }
.tab-active svg { width: 20px; }
.tab-active .tab-x { width: 13px; height: 13px; }
.winbar { width: 403px; display: flex; justify-content: space-between; padding-left: 23px; }
.wincontrols { display: grid; grid-template-columns: repeat(4, 69px); height: 42px; }

/* Address bar */
.toolbar { height: 65px; display: flex; align-items: center; background: #35363a; border-bottom: 2px solid #5f6164; }
.navbtns { display: flex; width: 163px; padding-left: 9px; }
.navbtns button { width: 48px; }
.omnibox { flex: 1; height: 51px; border-radius: 26px; background: #202124; display: flex; align-items: center; padding: 0 15px 0 20px; }
.url { flex: 1; margin-left: 18px; font-size: 20px; color: #9aa0a6; white-space: nowrap; }
.url b { font-weight: 400; color: #fff; }
.omni-actions { display: flex; gap: 24px; }
.extras { display: flex; align-items: center; padding: 0 12px 0 9px; }
.extras button { width: 48px; height: 40px; }
.extras .avatar { width: 33px; height: 33px; margin: 0 11px 0 7px; border-radius: 50%; background: #bf360c; color: #fff; font-size: 17px; }
.extras .update { width: 123px; height: 42px; border: 2px solid #f6aea9; border-radius: 21px; background: #463f43; color: #f6aea9; font-size: 17px; gap: 22px; }

/* Web page */
.viewport { flex: 1; min-height: 0; display: flex; background: #fff; }
.page { position: relative; flex: 1; min-width: 0; display: flex; flex-direction: column; }
.scrollbar { width: 25px; background: #f1f1f1; display: flex; flex-direction: column; align-items: center; padding: 9px 0; }
.scrollbar span { width: 21px; height: 181px; margin: 509px 0 auto; background: #c1c1c1; }
.scrollbar i { border: 5px solid transparent; }
.scrollbar .up { border-bottom: 6px solid #505050; border-top: 0; }
.scrollbar .down { border-top: 6px solid #505050; border-bottom: 0; }

.topbar { position: relative; z-index: 2; height: 84px; display: flex; align-items: center; border-top: 4px solid #f48225; border-bottom: 1px solid #d6d9dc; background: #fff; padding-right: 18px; }
.logo { flex: none; width: 249px; height: 79px; display: flex; align-items: center; padding: 0 0 8px 8px; background: #e3e6e8; color: #222426; font-family: "Open Sans", sans-serif; font-size: 25px; line-height: 30px; }
.logo svg { width: 44px; height: 44px; }
.logo span { display: flex; gap: 4px; padding: 8px 0 0 3px; }
.topnav { display: flex; gap: 43px; padding: 0 29px 0 19px; }
.topnav a { color: #525960; }
.search { position: relative; flex: 1; height: 47px; margin-right: 12px; }
.search > svg { position: absolute; left: 13px; top: 10px; }
.search input { width: 100%; height: 47px; border: 1px solid #babfc4; border-radius: 8px; padding: 0 12px 1px 48px; outline: 0; }
.search input::placeholder { color: #838c95; opacity: 1; }
.btn-login, .btn-signup { height: 49px; line-height: 48px; border-radius: 8px; padding: 0 17px; background: #e1ecf4; color: #39739d; }
.btn-signup { margin-left: 6px; background: #0a95ff; color: #fff; }

.popover { position: absolute; left: 0; right: 0; top: 63px; height: 155px; display: flex; background: #fff; border: 1px solid #d6d9dc; border-radius: 8px; box-shadow: 0 4px 10px rgba(0, 0, 0, .18); padding: 20px 21px 0 17px; }
.popover::before { content: ""; position: absolute; top: -9px; left: 50%; width: 17px; height: 17px; margin-left: -8px; background: #fff; border: 1px solid #d6d9dc; border-right: 0; border-bottom: 0; transform: rotate(45deg); }
.ai { width: 72px; height: 72px; margin-top: 18px; }
.pop-text { flex: 1; padding-left: 22px; font-size: 15px; line-height: 21px; }
.pop-text h2 { font-size: 30px; line-height: 36px; font-weight: 500; color: #0c0d0e; margin-bottom: 9px; }
.pop-text p { margin-bottom: 7px; color: #232629; }
.pop-close { align-self: flex-start; margin-top: 3px; }

.layout { flex: 1; min-height: 0; overflow: hidden; display: grid; grid-template-columns: 247px 1fr 450px; padding-right: 36px; }

/* Left navigation */
.leftnav { display: flex; border-right: 1px solid #d6d9dc; min-width: 0; }
.leftnav nav { flex: 1; padding-top: 37px; min-width: 0; }
.thumb { width: 15px; height: 655px; border-radius: 8px; background: #c9c9c9; }
.item { display: flex; align-items: center; height: 49px; margin-bottom: 2px; padding-left: 12px; color: #525960; white-space: nowrap; }
.item svg { width: 27px; height: 27px; margin-right: 6px; }
.item .ext { width: 20px; height: 20px; margin: 0 0 0 13px; }
.item.sub { padding-left: 45px; }
.item.short { height: 42px; margin-bottom: 0; }
.item.active { background: #f1f2f3; color: #0c0d0e; font-weight: 700; border-right: 4px solid #f48225; margin-bottom: 1px; }
.leftnav h3 { display: flex; justify-content: space-between; align-items: center; height: 30px; padding: 0 19px 0 12px; font-size: 15px; text-transform: uppercase; color: #6a737c; }
.leftnav h3 svg { width: 19px; height: 19px; }
.leftnav h3.public { margin: 19px 0 4px; }
.leftnav h3.collectives { margin-top: 20px; }
.leftnav h3.labs { margin-top: 24px; }
.leftnav h3.teams { margin: 23px 0 9px; }
.teamcard { border: 1px solid #e3e6e8; border-right: 0; border-radius: 5px 0 0 0; padding: 17px 16px 0 18px; height: 300px; color: #525960; }
.teamcard p { line-height: 25px; }
.teamcard b { color: #232629; }
.teamcard svg { display: block; width: 115px; height: 60px; margin: 34px 0 0 43px; }

/* Question column */
.main { padding: 9px 36px 0; min-width: 0; }
.comment { position: relative; height: 67px; padding: 16px 0 0 89px; border-bottom: 1px solid #e3e6e8; }
.comment::before { content: ""; position: absolute; top: 0; left: 84px; right: 0; height: 1px; background: #edeff0; }
.comment a { color: #babfc4; }
.answer-title { font-size: 26px; line-height: 36px; padding: 29px 0 30px; }
.editor { border: 1px solid #babfc4; border-radius: 5px 5px 0 0; }
.tools { height: 66px; display: flex; align-items: center; gap: 39px; padding-left: 11px; border-bottom: 1px solid #babfc4; padding-top: 3px; }
.group { display: flex; }
.group.wide { gap: 6px; }
.group button { width: 42px; height: 42px; }
.group svg { width: 24px; height: 24px; }
textarea { display: block; width: 100%; height: 298px; border: 0; resize: none; outline: 0; padding: 12px; }
.columns { display: grid; grid-template-columns: 1fr 1fr; gap: 24px; padding-top: 34px; }
.columns h2 { font-size: 30px; line-height: 44px; }
.provider { width: 100%; height: 56px; margin-bottom: 15px; gap: 6px; border: 1px solid #babfc4; border-radius: 8px; color: #3b4045; }
.provider svg { width: 26px; height: 26px; }
.signup h2 { margin-bottom: 15px; }
.provider.fb { border-color: #385499; background: #385499; color: #fff; font-weight: 500; }
.guest label { display: block; padding-left: 3px; font-size: 20px; line-height: 26px; font-weight: 500; color: #0c0d0e; margin: 9px 0 6px; }
.guest label.second { margin: 13px 0 3px; }
.guest p { padding-left: 3px; font-size: 17px; line-height: 26px; color: #3b4045; margin-bottom: 6px; }
.guest input { width: 100%; height: 49px; border: 1px solid #babfc4; border-radius: 8px; padding: 0 12px; outline: 0; display: block; }

/* Right column */
.right { padding: 20px 12px 0 0; color: #3b4045; }
.related { padding-left: 77px; }
.related a { display: block; white-space: nowrap; }
.right h2 { font-size: 27px; line-height: 36px; padding: 30px 0 28px; }
.right li { display: flex; gap: 10px; min-height: 28px; margin-bottom: 14px; font-size: 17px; line-height: 24px; }
.right li svg { width: 23px; height: 23px; margin-top: 5px; }

.statusbubble { position: absolute; left: 0; bottom: 0; height: 32px; padding: 4px 10px 0 7px; background: #3c4043; color: #dadce0; border-radius: 0 5px 0 0; font-size: 17px; }

/* Taskbar */
.taskbar { height: 60px; display: flex; background: linear-gradient(90deg, #21373f, #22353f 50%, #1c2a42 80%, #1b2742); color: #fff; }
.taskbar button { position: relative; }
.start { flex: none; width: 73px; }
.tasksearch { flex: none; width: 431px; background: #333; border: 2px solid #5f5f5f; display: flex; align-items: center; padding-left: 15px; font-size: 21px; color: #e3e3e3; overflow: hidden; }
.tasksearch span { flex: 1; padding: 3px 0 0 17px; }
.reader { width: 104px; height: 57px; }
.apps { flex: 1; display: flex; }
.apps button { width: 75px; }
.apps .open::after { content: ""; position: absolute; left: 7px; right: 7px; bottom: 0; height: 3px; background: #76b9ed; }
.apps .current { background: #4c5a66; }
.apps .current::after { left: 0; right: 0; }
.tray { display: flex; align-items: center; gap: 12px; padding-right: 7px; font-size: 17px; }
.weather { display: flex; align-items: center; gap: 12px; font-size: 19px; margin-right: 27px; }
.more { margin-right: 8px; }
.clock { display: flex; flex-direction: column; align-items: center; line-height: 27px; padding-left: 4px; }
.notif { margin-left: 16px; padding: 0 20px 0 0; display: flex; align-self: stretch; align-items: center; border-right: 1px solid #7b818c; padding-top: 10px; }
```
